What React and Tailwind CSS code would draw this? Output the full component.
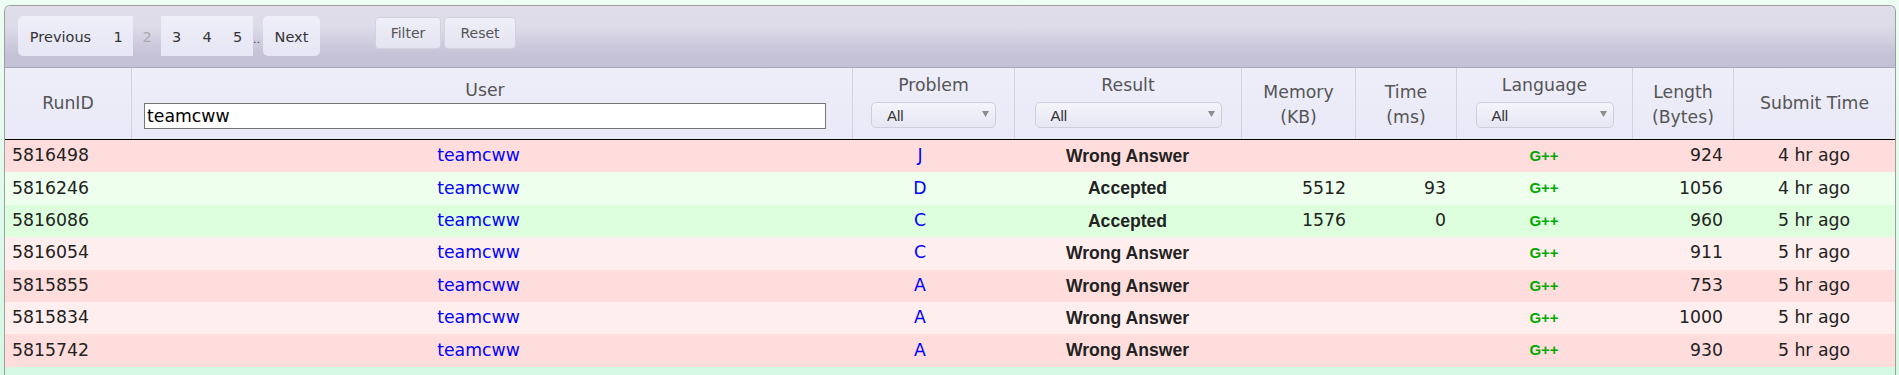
import React from 'react';

const rows = [
  { id: '5816498', prob: 'J', ac: false, mem: '', time: '', len: '924', ago: '4 hr ago' },
  { id: '5816246', prob: 'D', ac: true, mem: '5512', time: '93', len: '1056', ago: '4 hr ago' },
  { id: '5816086', prob: 'C', ac: true, mem: '1576', time: '0', len: '960', ago: '5 hr ago' },
  { id: '5816054', prob: 'C', ac: false, mem: '', time: '', len: '911', ago: '5 hr ago' },
  { id: '5815855', prob: 'A', ac: false, mem: '', time: '', len: '753', ago: '5 hr ago' },
  { id: '5815834', prob: 'A', ac: false, mem: '', time: '', len: '1000', ago: '5 hr ago' },
  { id: '5815742', prob: 'A', ac: false, mem: '', time: '', len: '930', ago: '5 hr ago' },
];

// odd rows (index 0, 2, ...) darker, even rows lighter
const rowBg = {
  ac: ['bg-[#ddffdd]', 'bg-[#eeffee]'],
  wa: ['bg-[#ffdddd]', 'bg-[#ffeeee]'],
};

const arial = "font-['Liberation_Sans',Arial,sans-serif]";

const FakeSelect = ({ width }) => (
  <div
    className={`${width} h-[26px] flex items-center justify-between rounded-[5px] border border-[#cfcfdc] bg-[linear-gradient(#f4f4fb,#e6e6f4)] pl-[15px] pr-[6px]`}
  >
    <span className={`${arial} text-[15px] leading-none text-[#333]`}>All</span>
    <svg width="7" height="6" viewBox="0 0 7 6" className="-mt-[2px]">
      <path d="M0 0H7L3.5 6Z" fill="#8c8c8c" />
    </svg>
  </div>
);

const PageBtn = ({ children, className = '' }) => (
  <div
    className={`h-[40px] pt-[3px] flex items-center justify-center bg-[linear-gradient(#efeffa,#e6e6f4)] text-[#333] ${className}`}
  >
    {children}
  </div>
);

export default function App() {
  return (
    <div className="h-[375px] overflow-hidden bg-[linear-gradient(#eefdf3,#d4f8e4)] pt-[5px] pl-[4px] font-['DejaVu_Sans',Verdana,sans-serif]">
      <div className="w-[1892px] border-x border-t border-[#9e9e9e] rounded-t-[6px] overflow-hidden">
        {/* toolbar */}
        <div className="h-[62px] border-b border-[#aaa8bb] bg-[linear-gradient(to_bottom,#dfdeea_0%,#dddbe8_35%,#c6c2d8_78%,#c4c0d6_100%)] flex items-start pt-[10px] pl-[13px]">
          <div className="flex items-center text-[14.5px]">
            <PageBtn className="w-[85px] rounded-l-[5px]">Previous</PageBtn>
            <PageBtn className="w-[30px]">1</PageBtn>
            <div className="w-[28px] h-[40px] pt-[3px] flex items-center justify-center text-[#aaa]">2</div>
            <PageBtn className="w-[31px]">3</PageBtn>
            <PageBtn className="w-[30px]">4</PageBtn>
            <PageBtn className="w-[31px]">5</PageBtn>
            <div className="w-[10px] h-[40px] flex items-center text-[11px] text-[#333] pt-[8px]">..</div>
            <PageBtn className="w-[57px] rounded-[5px]">Next</PageBtn>
          </div>
          <div className="ml-[55px] mt-[1px] flex gap-[3px] text-[14px] text-[#555]">
            <button className="w-[66px] h-[32px] pt-[1px] rounded-[4px] border border-[#d2d2de] bg-[linear-gradient(#efeff9,#e4e4f1)]">
              Filter
            </button>
            <button className="w-[72px] h-[32px] pt-[1px] rounded-[4px] border border-[#d2d2de] bg-[linear-gradient(#efeff9,#e4e4f1)]">
              Reset
            </button>
          </div>
        </div>

        {/* header row */}
        <div className="h-[72px] border-b border-black bg-[linear-gradient(#eeeefa,#e9e9f7)] grid grid-cols-[126px_721px_162px_227px_114px_101px_176px_101px_162px] text-[17.3px] text-[#555]">
          <div className="flex items-center justify-center">RunID</div>
          <div className="border-l border-[#d3d3dd] pl-[12px] pt-[12px] flex flex-col items-start">
            <div className="w-[682px] text-center leading-[20px]">User</div>
            <input
              readOnly
              value="teamcww"
              className="mt-[3px] w-[682px] h-[26px] border border-[#767676] bg-white pl-[2px] text-[17.3px] text-black outline-none"
            />
          </div>
          <div className="border-l border-[#d3d3dd] pt-[7px] flex flex-col items-center">
            <div className="leading-[20px]">Problem</div>
            <div className="mt-[7px]">
              <FakeSelect width="w-[125px]" />
            </div>
          </div>
          <div className="border-l border-[#d3d3dd] pt-[7px] flex flex-col items-center">
            <div className="leading-[20px]">Result</div>
            <div className="mt-[7px]">
              <FakeSelect width="w-[187px]" />
            </div>
          </div>
          <div className="border-l border-[#d3d3dd] pt-[12px] text-center leading-[25px]">
            Memory
            <br />
            (KB)
          </div>
          <div className="border-l border-[#d3d3dd] pt-[12px] text-center leading-[25px]">
            Time
            <br />
            (ms)
          </div>
          <div className="border-l border-[#d3d3dd] pt-[7px] flex flex-col items-center">
            <div className="leading-[20px]">Language</div>
            <div className="mt-[7px]">
              <FakeSelect width="w-[138px]" />
            </div>
          </div>
          <div className="border-l border-[#d3d3dd] pt-[12px] text-center leading-[25px]">
            Length
            <br />
            (Bytes)
          </div>
          <div className="border-l border-[#d3d3dd] flex items-center justify-center">Submit Time</div>
        </div>

        {/* rows */}
        <div className="text-[17.3px] text-[#222]">
          {rows.map((r, i) => (
            <div
              key={r.id}
              className={`h-[32.4px] grid grid-cols-[126px_695px_188px_227px_114px_101px_176px_101px_162px] items-center ${
                r.ac ? rowBg.ac[i % 2] : rowBg.wa[i % 2]
              }`}
            >
              <div className="pl-[7px]">{r.id}</div>
              <div className="text-center text-[#0000ff]">teamcww</div>
              <div className="text-center text-[#0000ff]">{r.prob}</div>
              <div className={`text-center font-bold text-[17.6px] ${arial}`}>{r.ac ? 'Accepted' : 'Wrong Answer'}</div>
              <div className="text-right pr-[9px]">{r.mem}</div>
              <div className="text-right pr-[10px]">{r.time}</div>
              <div className={`text-center font-bold text-[15px] text-[#00a800] ${arial}`}>G++</div>
              <div className="text-right pr-[10px]">{r.len}</div>
              <div className="text-center">{r.ago}</div>
            </div>
          ))}
        </div>
        <div className="h-[40px]" />
      </div>
    </div>
  );
}
